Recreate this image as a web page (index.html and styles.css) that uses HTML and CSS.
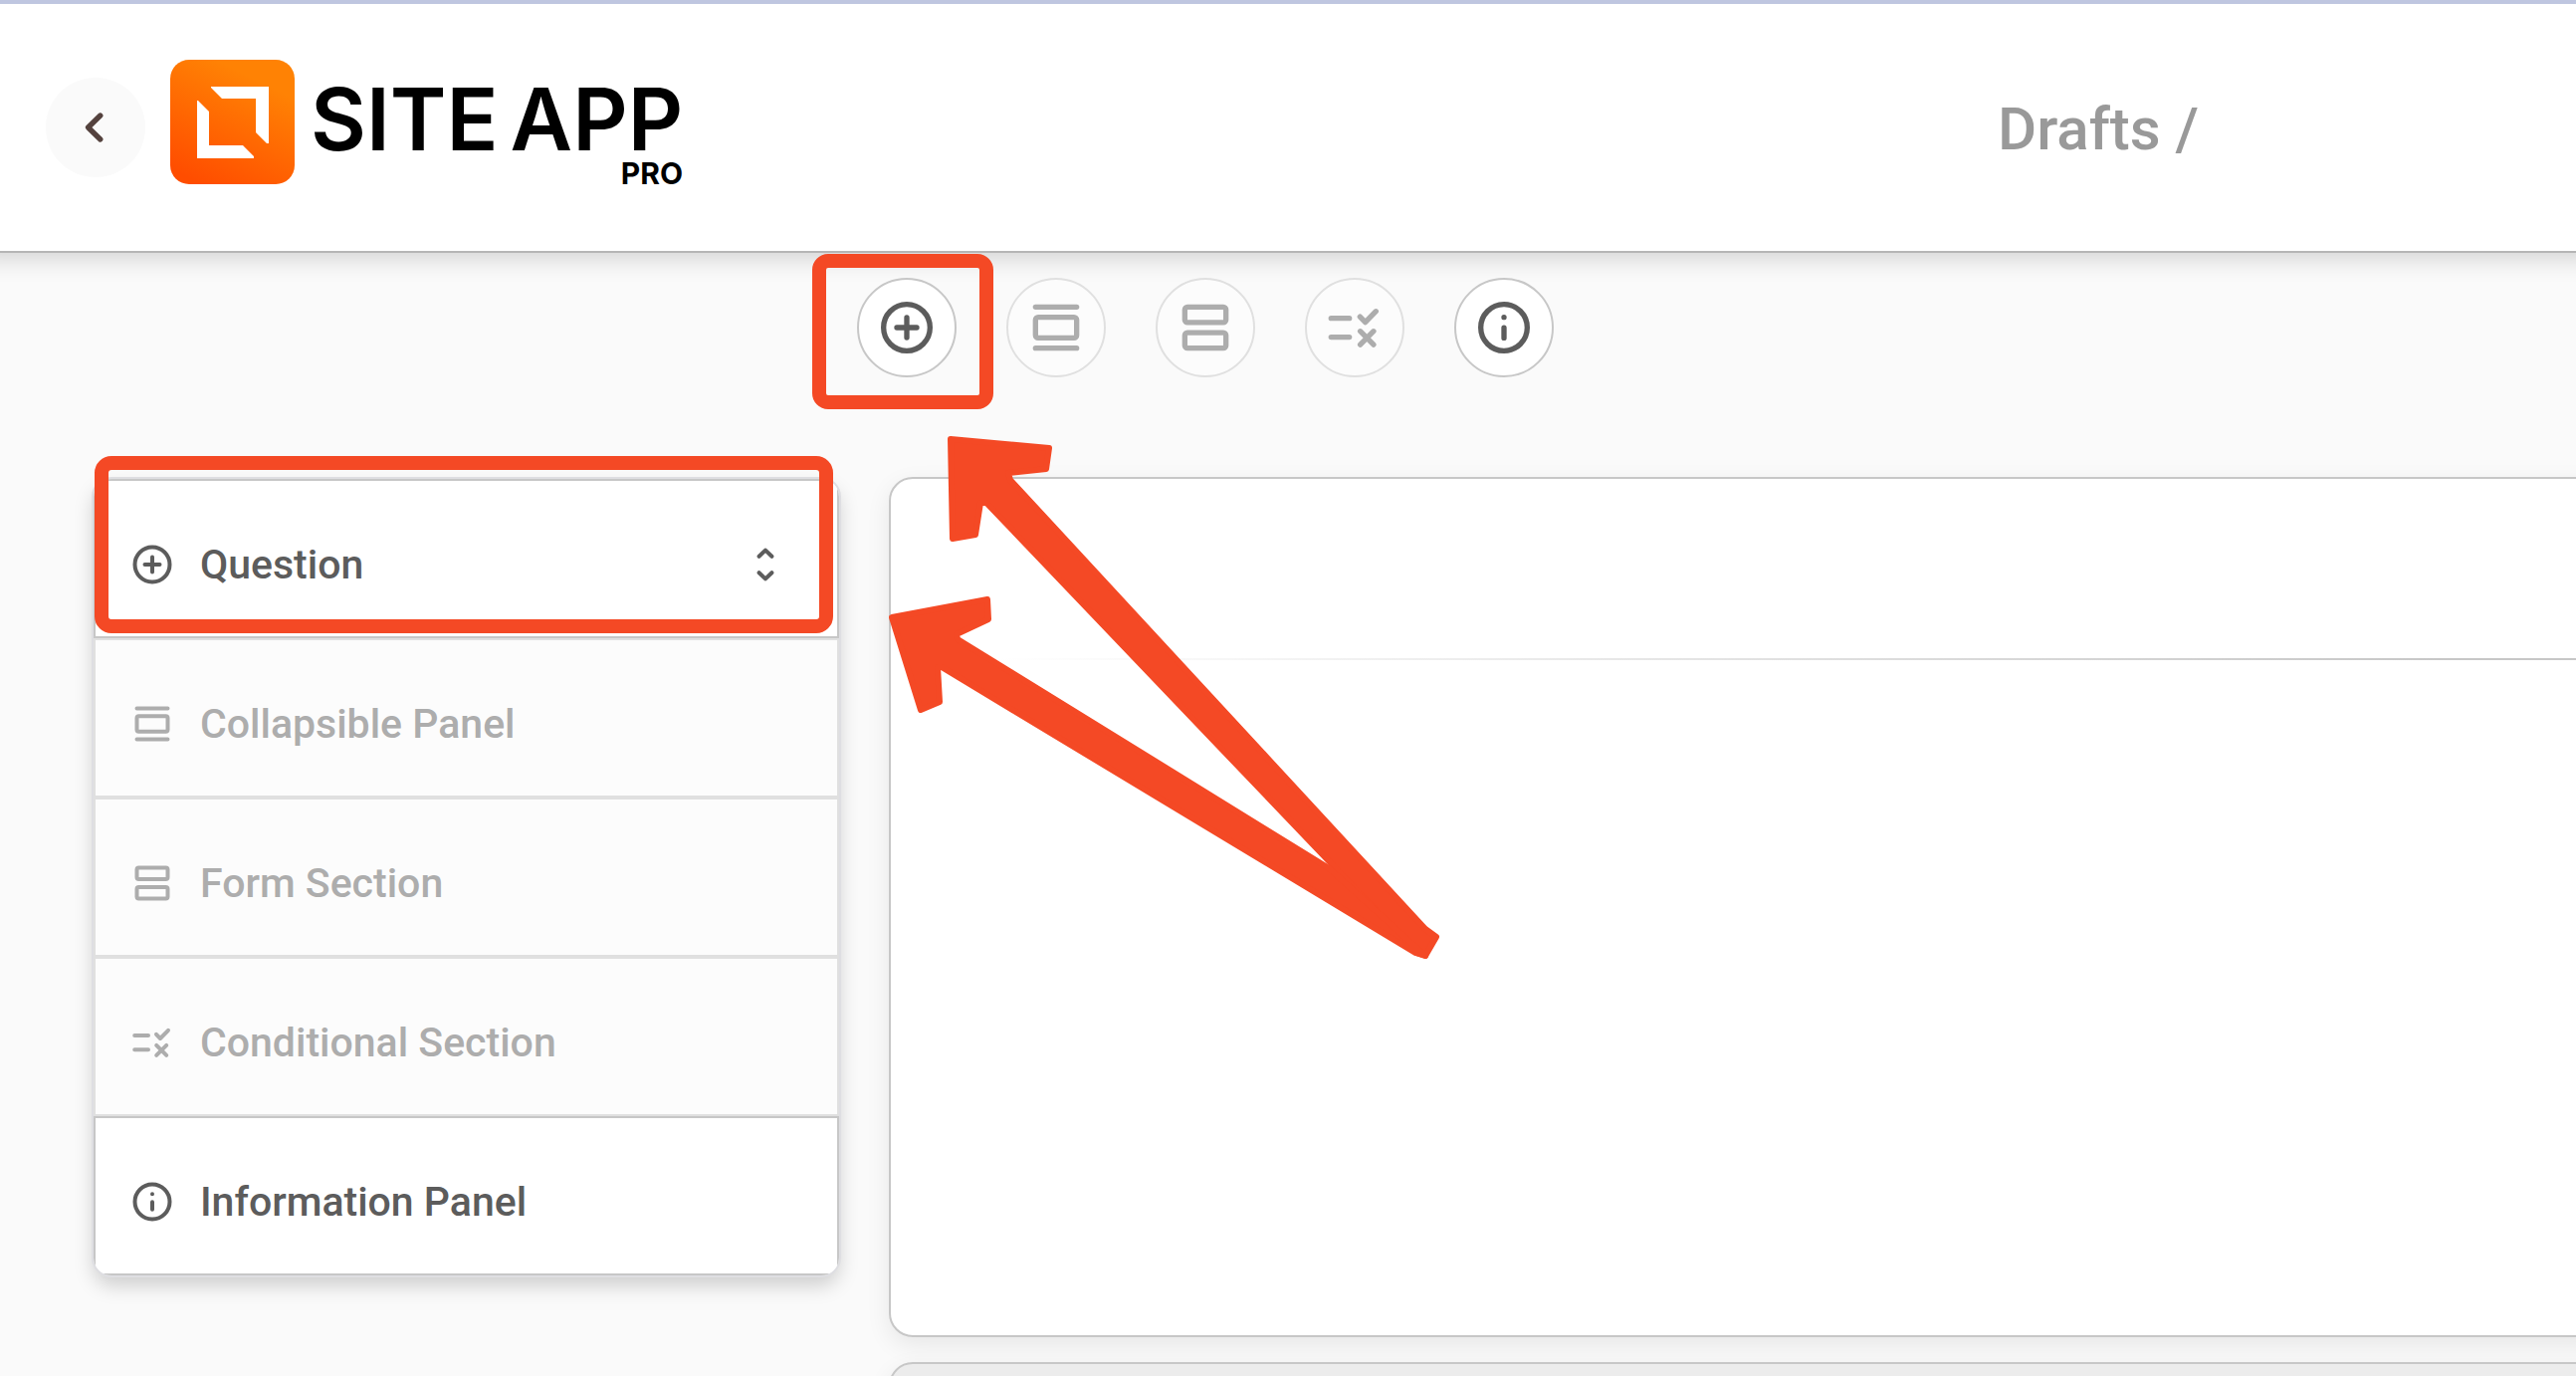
FILE: index.html
```html
<!DOCTYPE html>
<html lang="en">
	<head>
		<meta charset="UTF-8">
		<title>Site App Pro - Drafts</title>
		<link rel="stylesheet" href="styles.css">
	</head>
	<body>
		<svg class="symbols" aria-hidden="true">
			<symbol id="icon-question" viewBox="0 0 24 24">
				<circle cx="12" cy="12" r="8.75"/>
				<path d="M12 8.25v7.5M8.25 12h7.5"/>
			</symbol>
			<symbol id="icon-panel" viewBox="0 0 24 24">
				<path d="M4.25 4.25h15.5M4.25 19.75h15.5"/>
				<rect x="4.25" y="8.1" width="15.5" height="7.8" rx="1"/>
			</symbol>
			<symbol id="icon-section" viewBox="0 0 24 24">
				<rect x="4.25" y="4.25" width="15.5" height="5.8" rx="1"/>
				<rect x="4.25" y="13.95" width="15.5" height="5.8" rx="1"/>
			</symbol>
			<symbol id="icon-conditional" viewBox="0 0 24 24">
				<path d="M3.1 8.5H10M3.1 15.6H10M14 7.9l2 2.1 4-4.1M14.1 13.4l5 5M19.1 13.4l-5 5"/>
			</symbol>
			<symbol id="icon-info" viewBox="0 0 24 24">
				<circle cx="12" cy="12" r="8.75"/>
				<path d="M12 12.1v3.8M12 8.1v.01"/>
			</symbol>
			<symbol id="icon-updown" viewBox="0 0 24 24">
				<path d="M8.8 7.9L12 4.8l3.2 3.1M8.8 16.1l3.2 3.1 3.2-3.1"/>
			</symbol>
		</svg>
		<header class="header">
			<button class="back" aria-label="Back">
				<svg viewBox="0 0 24 24"><path d="M13.8 7.5L9.2 12l4.6 4.5"/></svg>
			</button>
			<a class="logo" href="#">
				<svg class="logomark" viewBox="0 0 125 125">
					<defs>
						<linearGradient id="logofill" x1="0.25" y1="1" x2="0.75" y2="0">
							<stop offset="0" stop-color="#ff4d00"/>
							<stop offset="0.85" stop-color="#ff8204"/>
						</linearGradient>
					</defs>
					<rect width="125" height="125" rx="19" fill="url(#logofill)"/>
					<path fill="#fff" d="M41 27h58v57h-2L86 73V39H52L41 28zM27 41h1l11 11v34h34l11 11v2H27z"/>
				</svg>
				<span class="wordmark">
					<span class="name"><span>SITE</span> <span>APP</span></span>
					<span class="edition">PRO</span>
				</span>
			</a>
			<nav class="breadcrumb"><a href="#">Drafts</a> /</nav>
		</header>
		<main class="workspace">
			<div class="toolbar">
				<button class="tool" aria-label="Question"><svg><use href="#icon-question"/></svg></button>
				<button class="tool" aria-label="Collapsible Panel" disabled><svg><use href="#icon-panel"/></svg></button>
				<button class="tool" aria-label="Form Section" disabled><svg><use href="#icon-section"/></svg></button>
				<button class="tool" aria-label="Conditional Section" disabled><svg><use href="#icon-conditional"/></svg></button>
				<button class="tool" aria-label="Information Panel"><svg><use href="#icon-info"/></svg></button>
			</div>
			<div class="columns">
				<div class="menu">
					<button class="item">
						<svg><use href="#icon-question"/></svg>
						<span>Question</span>
						<svg class="updown"><use href="#icon-updown"/></svg>
					</button>
					<button class="item" disabled>
						<svg><use href="#icon-panel"/></svg>
						<span>Collapsible Panel</span>
					</button>
					<button class="item" disabled>
						<svg><use href="#icon-section"/></svg>
						<span>Form Section</span>
					</button>
					<button class="item" disabled>
						<svg><use href="#icon-conditional"/></svg>
						<span>Conditional Section</span>
					</button>
					<button class="item">
						<svg><use href="#icon-info"/></svg>
						<span>Information Panel</span>
					</button>
				</div>
				<div class="canvas">
					<section class="card">
						<hr class="divider">
					</section>
					<section class="card muted"></section>
				</div>
			</div>
		</main>
		<svg class="annotations" viewBox="0 0 1500 1000" aria-hidden="true">
			<rect x="823" y="262" width="168" height="142" rx="9"/>
			<rect x="102" y="465" width="728" height="164" rx="10"/>
			<path class="arrow" d="M955 441L1054 450 1051 471 1013 475 1015 482 1432 933 1443 941 1432 960 1423 957 991 505H985L980 537 957 541z"/>
			<path class="arrow" d="M896 620L992 602 993 622 961 637 962 642 1335 872 1432 960 1422 957 946 670H942L944 705 925 713z"/>
		</svg>
	</body>
</html>
```

FILE: styles.css
```css
* {
	box-sizing: border-box;
}
html, body {
	margin: 0px;
	height: 100%;
}
body {
	display: flex;
	flex-direction: column;
	position: relative;
	overflow: hidden;
	background-color: #fafafa;
	color: #5c5c5c;
	font-family: Roboto, "Liberation Sans", sans-serif;
	font-weight: 500;
}
a {
	color: inherit;
	text-decoration: none;
}
button {
	font: inherit;
	color: inherit;
	cursor: pointer;
}
button:disabled {
	cursor: default;
}
svg {
	flex: none;
	fill: none;
	stroke: currentColor;
	stroke-width: 2;
	stroke-linecap: round;
	stroke-linejoin: round;
}
.symbols {
	position: absolute;
	width: 0px;
	height: 0px;
}

.header {
	display: flex;
	align-items: center;
	flex: none;
	height: 254px;
	padding: 0px 379px 0px 46px;
	border-top: 4px solid #bfc6e0;
	border-bottom: 2px solid #b5b5b5;
	background-color: #fff;
	box-shadow: 0px -20px 24px 24px rgba(0, 0, 0, 0.18);
}
.back {
	display: grid;
	place-items: center;
	width: 100px;
	height: 100px;
	padding: 0px;
	border: none;
	border-radius: 50%;
	background-color: #fafafa;
	color: #54423e;
}
.back > svg {
	width: 64px;
	height: 64px;
}
.logo {
	display: flex;
	gap: 16px;
	margin-left: 25px;
	padding-bottom: 12px;
	color: #000;
}
.logomark {
	width: 125px;
	height: 125px;
	stroke: none;
}
.wordmark {
	display: flex;
	flex-direction: column;
	align-items: flex-end;
	padding-top: 16px;
	font-family: Inter, "Liberation Sans", sans-serif;
	font-weight: 600;
}
.name {
	display: flex;
	gap: 12px;
	font-size: 86px;
	line-height: 88px;
}
.edition {
	font-size: 30px;
	font-weight: 700;
	line-height: 20px;
}
.breadcrumb {
	margin-left: auto;
	padding-top: 4px;
	color: #999;
	font-size: 60px;
	line-height: 72px;
}

.workspace {
	flex: 1;
	min-height: 0px;
	padding: 25px 0px 0px 94px;
}
.toolbar {
	display: flex;
	gap: 50px;
	padding-left: 767px;
}
.tool {
	display: grid;
	place-items: center;
	width: 100px;
	height: 100px;
	padding: 0px;
	border: 2px solid #c7c7c7;
	border-radius: 50%;
	background-color: #fff;
}
.tool > svg {
	width: 64px;
	height: 64px;
}
.tool:disabled, .item:disabled {
	border-color: #e0e0e0;
	background-color: #fcfcfc;
	color: #adadad;
}

.columns {
	display: grid;
	grid-template-columns: 749px 1fr;
	column-gap: 50px;
	align-items: start;
	margin-top: 100px;
}
.menu {
	margin-top: 2px;
	border-radius: 18px;
	overflow: hidden;
	box-shadow: 0px 0px 0px 2px #dedee2, 0px 10px 20px rgba(0, 0, 0, 0.18);
}
.item {
	display: flex;
	align-items: center;
	gap: 24px;
	width: 100%;
	height: 160px;
	padding: 12px 48px 0px 33px;
	border: 2px solid #c7c7c7;
	background-color: #fff;
	font-size: 41px;
	line-height: 48px;
}
.item > svg {
	width: 48px;
	height: 48px;
}
.item > .updown {
	margin-left: auto;
}

/* the canvas runs past the right edge of the window */
.canvas {
	display: grid;
	row-gap: 25px;
	margin-right: -40px;
}
.card {
	min-height: 864px;
	border: 2px solid #c7c7c7;
	border-radius: 24px;
	background-color: #fff;
	box-shadow: 0px 8px 24px rgba(0, 0, 0, 0.08);
}
.card.muted {
	background-color: #ececec;
}
.divider {
	height: 2px;
	margin: 180px 0px 0px;
	border: none;
	background: linear-gradient(to right, transparent 6%, #c7c7c7 90%);
}

.annotations {
	position: absolute;
	top: 0px;
	left: 0px;
	width: 1500px;
	height: 1000px;
	stroke: #f44925;
	stroke-width: 14;
	pointer-events: none;
}
.annotations > .arrow {
	fill: #f44925;
	stroke-width: 6;
}
```
